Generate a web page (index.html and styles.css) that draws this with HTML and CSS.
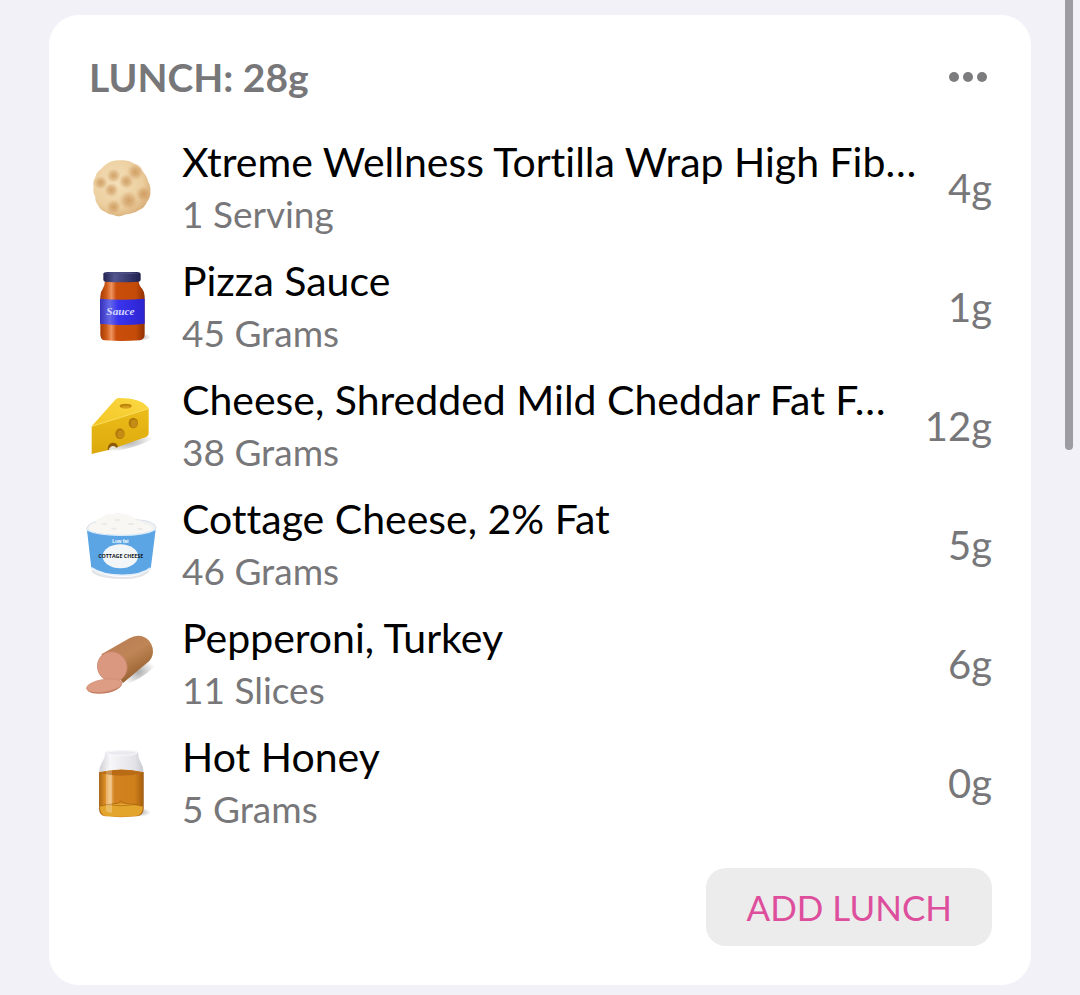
FILE: index.html
```html
<!DOCTYPE html>
<html lang="en">
<head>
  <meta charset="UTF-8" />
  <meta name="viewport" content="width=device-width, initial-scale=1.0"/>
  <title>Lunch</title>
  <link rel="stylesheet" href="styles.css">
</head>
<body>

  <main class="card">
    <header class="card-header">
      <h1>LUNCH: 28g</h1>
      <button class="more" type="button" aria-label="More options">
        <svg viewBox="0 0 38 10" aria-hidden="true">
          <circle cx="5" cy="5" r="5"/><circle cx="19" cy="5" r="5"/><circle cx="33" cy="5" r="5"/>
        </svg>
      </button>
    </header>

    <ul class="foods">
      <li class="food">
        <!-- Tortilla -->
        <svg class="icon" viewBox="15 19 216 216" aria-hidden="true">
          <defs>
            <radialGradient id="dough" cx=".4" cy=".4" r=".65">
              <stop offset="0" stop-color="#f4dfb9"/><stop offset=".7" stop-color="#eccf9f"/><stop offset="1" stop-color="#d9ae78"/>
            </radialGradient>
            <radialGradient id="spot">
              <stop offset="0" stop-color="#c79050" stop-opacity=".75"/><stop offset=".5" stop-color="#cf9c62" stop-opacity=".55"/><stop offset="1" stop-color="#dcae78" stop-opacity="0"/>
            </radialGradient>
          </defs>
          <path fill="url(#dough)" d="M96 47q14-5 27-3 20-3 38 9 17 7 25 22 15 15 18 32 9 16 7 30 1 20-10 31-6 17-22 24-13 10-29 12-16 2-24 6-14 5-25-2-16-1-26-10-14-5-20-18-11-15-9-26-9-16-5-29-4-17 4-29 4-17 19-27 15-17 32-22z"/>
          <g fill="url(#spot)">
            <circle cx="62" cy="111" r="21"/><circle cx="101" cy="90" r="22"/><circle cx="94" cy="133" r="22"/>
            <circle cx="139" cy="107" r="23"/><circle cx="166" cy="79" r="26"/><circle cx="146" cy="165" r="29"/>
            <circle cx="101" cy="184" r="23"/><circle cx="190" cy="145" r="24"/>
          </g>
        </svg>
        <div class="info">
          <p class="name">Xtreme Wellness Tortilla Wrap High Fib…</p>
          <p class="amount">1 Serving</p>
        </div>
        <span class="grams">4g</span>
      </li>

      <li class="food">
        <!-- Sauce jar -->
        <svg class="icon" viewBox="15 27 216 216" aria-hidden="true">
          <defs>
            <linearGradient id="jar">
              <stop offset="0" stop-color="#a53a05"/><stop offset=".14" stop-color="#cf5b18"/><stop offset=".25" stop-color="#ef9460"/><stop offset=".36" stop-color="#c94e0b"/><stop offset=".8" stop-color="#c54b08"/><stop offset="1" stop-color="#8f2f03"/>
            </linearGradient>
            <linearGradient id="label">
              <stop offset="0" stop-color="#3430bb"/><stop offset=".22" stop-color="#6668e8"/><stop offset=".4" stop-color="#3a35ee"/><stop offset="1" stop-color="#2c22d0"/>
            </linearGradient>
            <linearGradient id="lid">
              <stop offset="0" stop-color="#222352"/><stop offset=".3" stop-color="#52558f"/><stop offset="1" stop-color="#20204e"/>
            </linearGradient>
            <radialGradient id="shade">
              <stop offset="0" stop-color="#777" stop-opacity=".6"/><stop offset="1" stop-color="#777" stop-opacity="0"/>
            </radialGradient>
          </defs>
          <ellipse cx="178" cy="225" rx="36" ry="12" fill="url(#shade)"/>
          <path fill="url(#jar)" d="M75 54h101q0 16 11 27 7 9 7 22v113q0 18-16 19-53 4-104 0-12-1-13-17V103q0-14 7-22 7-10 7-27z"/>
          <path fill="url(#label)" d="M60 110q66 6 134 0v75q-66 8-134 0z"/>
          <path fill="url(#lid)" d="M70 35q1-5 12-5h89q10 0 11 6v17q0 5-6 6-50 4-100 0-6-1-6-6z"/>
          <path fill="#4b4d83" d="M73 34q52-6 105 0-50 6-105 0z"/>
          <text class="sauce-text" x="79" y="160">Sauce</text>
        </svg>
        <div class="info">
          <p class="name">Pizza Sauce</p>
          <p class="amount">45 Grams</p>
        </div>
        <span class="grams">1g</span>
      </li>

      <li class="food">
        <!-- Cheese wedge -->
        <svg class="icon" viewBox="15 15 216 216" aria-hidden="true">
          <defs>
            <linearGradient id="cheese-top" x1="0" y1="1" x2="1" y2="0">
              <stop offset="0" stop-color="#f3c524"/><stop offset="1" stop-color="#fbd944"/>
            </linearGradient>
            <linearGradient id="cheese-side" x1="0" y1="0" x2="0" y2="1">
              <stop offset="0" stop-color="#ecbd1a"/><stop offset="1" stop-color="#dca90c"/>
            </linearGradient>
          </defs>
          <path fill="url(#shade)" d="M55 204l150-68q28 10 13 25-58 34-163 43z"/>
          <path fill="url(#cheese-top)" d="M35 124l70-79q4-6 12-6 64 0 86 27 3 3 3 5z"/>
          <path fill="url(#cheese-side)" d="M35 124l171-53v73q0 9-10 13l-83 29-28 9-50 12z"/>
          <path fill="none" stroke="#ffe361" stroke-width="2" d="M36 124l170-53"/>
          <path fill="#8c5a08" d="M83 196q-1-20 14-23 14-1 17 13l-6 2z"/>
          <path fill="#e9e4d8" d="M86 197q1-11 11-14 8-1 12 5z"/>
          <ellipse cx="137" cy="63" rx="18" ry="7" fill="#bd850b"/>
          <ellipse cx="138" cy="66" rx="14" ry="4" fill="#d49e1c"/>
          <ellipse cx="120" cy="146" rx="14" ry="16" fill="#ae7a0b"/>
          <ellipse cx="122" cy="148" rx="10" ry="12" fill="#c48c14"/>
          <ellipse cx="160" cy="114" rx="14" ry="16" fill="#ae7a0b"/>
          <ellipse cx="162" cy="116" rx="10" ry="12" fill="#c48c14"/>
        </svg>
        <div class="info">
          <p class="name">Cheese, Shredded Mild Cheddar Fat F…</p>
          <p class="amount">38 Grams</p>
        </div>
        <span class="grams">12g</span>
      </li>

      <li class="food">
        <!-- Cottage cheese tub -->
        <svg class="icon" viewBox="15 15 216 216" aria-hidden="true">
          <path fill="#e3e5e8" d="M34 196q40 24 96 23 54 1 78-26l-3 13q-26 20-76 19-65 0-92-18z"/>
          <path fill="#eef0f2" stroke="#cdd8e2" stroke-width="2" d="M20 73q5-20 55-24 50-6 106-1 43 4 47 22l-5 20H25z"/>
          <path fill="#f8f7f4" d="M27 78q-2-20 20-22 2-15 20-15 9-15 29-10 18-9 33-1 17-2 27 9 11 0 12 10 19-1 25 11 21 0 27 15-20 16-96 17-80 0-97-14z"/>
          <g fill="#ebe9e5">
            <ellipse cx="73" cy="59" rx="9" ry="3"/><ellipse cx="112" cy="48" rx="8" ry="3"/><ellipse cx="153" cy="60" rx="10" ry="3"/>
            <ellipse cx="102" cy="74" rx="9" ry="3"/><ellipse cx="180" cy="75" rx="9" ry="3"/>
          </g>
          <path fill="#5ba5e5" d="M21 79q34 15 105 15 67 0 101-17l-15 118q-28 19-84 18-59 1-94-20z"/>
          <path fill="none" stroke="#d9ebf9" stroke-width="4" d="M20 78q34 17 105 16 70 0 103-18"/>
          <path fill="none" stroke="#e8f1f8" stroke-width="5" d="M34 191q32 23 94 23 58 0 84-22"/>
          <ellipse cx="121" cy="157" rx="53" ry="36" fill="#f3f6f8"/>
          <text class="tub-brand" x="121" y="117">Low fat</text>
          <text class="tub-text" x="122" y="162">COTTAGE CHEESE</text>
        </svg>
        <div class="info">
          <p class="name">Cottage Cheese, 2% Fat</p>
          <p class="amount">46 Grams</p>
        </div>
        <span class="grams">5g</span>
      </li>

      <li class="food">
        <!-- Sliced sausage -->
        <svg class="icon" viewBox="15 12 216 216" aria-hidden="true">
          <defs>
            <linearGradient id="skin" x1=".2" y1=".1" x2=".7" y2=".9">
              <stop offset="0" stop-color="#b87f55"/><stop offset=".45" stop-color="#c08556"/><stop offset="1" stop-color="#96602f"/>
            </linearGradient>
          </defs>
          <path fill="url(#shade)" d="M120 184l95-83q22 8 7 28-41 40-96 57z"/>
          <path fill="url(#skin)" d="M64 91l84-48q22-13 44-4 20 9 26 33 4 24-10 39l-79 66z"/>
          <ellipse cx="97" cy="128" rx="45" ry="47" fill="#c98469" transform="rotate(-40 97 128)"/>
          <ellipse cx="96" cy="129" rx="43" ry="45" fill="#d9987f" transform="rotate(-40 96 129)"/>
          <path fill="#bd7459" d="M20 192q-1 16 34 17 35 0 56-12 18-10 16-24z"/>
          <ellipse cx="73" cy="185" rx="54" ry="19" fill="#dd9c84" stroke="#cf8a70" stroke-width="2" transform="rotate(-9 73 185)"/>
        </svg>
        <div class="info">
          <p class="name">Pepperoni, Turkey</p>
          <p class="amount">11 Slices</p>
        </div>
        <span class="grams">6g</span>
      </li>

      <li class="food">
        <!-- Honey jar -->
        <svg class="icon" viewBox="15 23 216 216" aria-hidden="true">
          <defs>
            <linearGradient id="honey">
              <stop offset="0" stop-color="#a8651a"/><stop offset=".13" stop-color="#d98b22"/><stop offset=".25" stop-color="#f0b96b"/><stop offset=".35" stop-color="#d28220"/><stop offset=".8" stop-color="#cf801b"/><stop offset="1" stop-color="#a55d0f"/>
            </linearGradient>
            <linearGradient id="glass">
              <stop offset="0" stop-color="#cfcfd4"/><stop offset=".25" stop-color="#f7f7f9"/><stop offset=".8" stop-color="#e2e2e8"/><stop offset="1" stop-color="#c9c9d1"/>
            </linearGradient>
          </defs>
          <ellipse cx="180" cy="219" rx="32" ry="13" fill="url(#shade)"/>
          <path fill="url(#glass)" d="M76 40q2-8 48-8t50 8q1 17 8 28 9 16 9 32v110H57V100q0-16 9-31 9-12 10-29z"/>
          <ellipse cx="125" cy="41" rx="46" ry="7" fill="#e9e9ef" stroke="#fff" stroke-width="2"/>
          <path fill="url(#honey)" d="M57 99q66-17 134 0v108q0 21-20 24-48 5-96 0-17-3-18-23z"/>
          <path fill="#b96b16" d="M57 100q66-17 134 0-66 18-134 0z"/>
          <path fill="#e3a52c" d="M59 201q62-17 130 0-1 26-19 28-48 6-94 0-15-3-17-28z"/>
          <path fill="none" stroke="#a9650f" stroke-width="2" d="M59 201q34-8 54-9l10-7 11 7q28 2 54 9M76 195q48 9 96 0"/>
          <path fill="#fff" opacity=".25" d="M78 82q8 3 18 1v138q-10 0-18-5z"/>
        </svg>
        <div class="info">
          <p class="name">Hot Honey</p>
          <p class="amount">5 Grams</p>
        </div>
        <span class="grams">0g</span>
      </li>
    </ul>

    <footer class="card-footer">
      <button class="add" type="button">ADD LUNCH</button>
    </footer>
  </main>

  <div class="scroll-thumb"></div>

</body>
</html>
```
FILE: styles.css
```css
:root {
  --bg: #f2f1f8;
  --card-bg: #ffffff;
  --accent: #dd4f9c;
  --muted: #77777a;
  --text: #000000;
}

* {
  box-sizing: border-box;
}

body {
  margin: 0;
  padding: 15px 49px 9px;
  font-family: Avenir, Lato, sans-serif;
  font-variant-ligatures: none;
  background-color: var(--bg);
  color: var(--text);
}

h1, p, ul {
  margin: 0;
  padding: 0;
}

.card {
  padding: 38px 39px 39px 36px;
  background: var(--card-bg);
  border-radius: 30px;
}

.card-header {
  display: flex;
  justify-content: space-between;
  align-items: center;
  padding: 0 5px 0 4px;
  margin-bottom: 35px;
}

h1 {
  font-size: 39px;
  line-height: 48px;
  color: var(--muted);
}

.more {
  display: flex;
  padding: 0;
  border: none;
  background: none;
  cursor: pointer;
}

.more svg {
  width: 38px;
  height: 10px;
  fill: #7c7c7e;
}

.foods {
  display: grid;
  gap: 15px;
  list-style: none;
}

.food {
  display: flex;
  align-items: center;
}

.icon {
  flex: none;
  width: 72px;
  height: 72px;
  margin-right: 25px;
  overflow: visible;
}

.info {
  flex: 1;
  min-width: 0;
}

.name, .amount {
  font-size: 41px;
  line-height: 52px;
  white-space: nowrap;
  overflow: hidden;
  text-overflow: ellipsis;
}

.amount {
  font-size: 37px;
  color: var(--muted);
}

.grams {
  margin-left: 16px;
  font-size: 40px;
  color: var(--muted);
}

.card-footer {
  display: flex;
  justify-content: flex-end;
  margin-top: 33px;
}

.add {
  padding: 0 40px;
  border: none;
  border-radius: 20px;
  background: #ececec;
  color: var(--accent);
  font-family: inherit;
  font-size: 35px;
  line-height: 78px;
  cursor: pointer;
}

.sauce-text {
  font: italic bold 34px "Liberation Serif", serif;
  fill: #d6d8ff;
}

.tub-brand {
  font: bold 14px "Liberation Sans", sans-serif;
  fill: #ffffff;
  text-anchor: middle;
}

.tub-text {
  font: bold 16px "Open Sans", sans-serif;
  fill: #15181c;
  text-anchor: middle;
}

.scroll-thumb {
  position: fixed;
  top: 0;
  right: 7px;
  width: 8px;
  height: 450px;
  border-radius: 0 0 4px 4px;
  background: #9d9ca2;
}
```
